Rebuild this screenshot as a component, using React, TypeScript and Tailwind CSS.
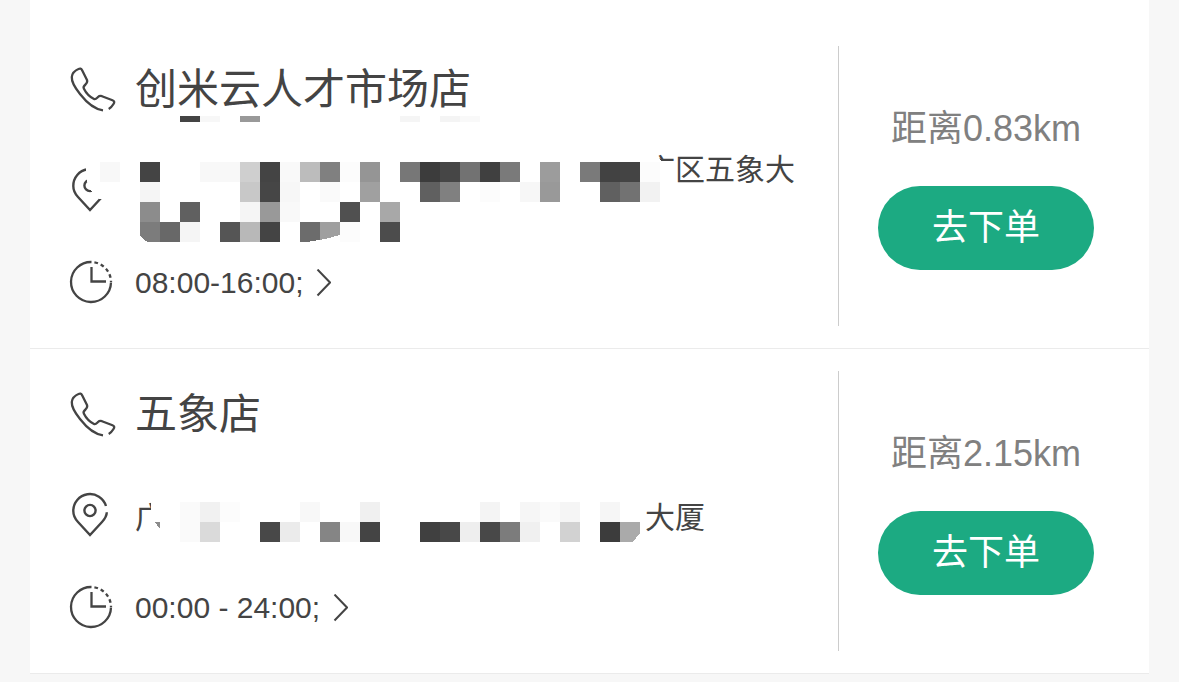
import React from 'react'

type Cell = [number, string]

interface MosaicRow {
  y: number
  h: number
  cells: Cell[]
}

interface Store {
  id: number
  name: string
  addressStart: string
  addressEnd: string
  gapClass: string
  secondLine: boolean
  hours: string
  distance: string
  // white areas that hide part of the text and icon
  masks: string[]
  rows: MosaicRow[]
  // corners cut off from the mosaic
  cuts: string[]
  chip?: string
}

const CELL = 20

const stores: Store[] = [
  {
    id: 1,
    name: '创米云人才市场店',
    addressStart: '',
    addressEnd: '庆区五象大',
    gapClass: 'w-[510px]',
    secondLine: true,
    hours: '08:00-16:00;',
    distance: '0.83km',
    masks: [
      '16,116 17,134 19,142 23,147 30,153 50,153 50,116',
      '573,100 588,100 588,112 592,115 598,116 606,116 606,145 573,145',
    ],
    rows: [
      { y: 70, h: 6, cells: [[110, '#444444'], [130, '#f7f7f7'], [170, '#999999'], [330, '#f5f5f5'], [370, '#f4f4f4'], [390, '#f9f9f9']] },
      {
        y: 116,
        h: CELL,
        cells: [
          [30, '#f8f8f8'], [70, '#444444'], [130, '#f8f8f8'], [150, '#f8f8f8'], [170, '#cfcfcf'], [190, '#444444'],
          [210, '#f9f9f9'], [230, '#bcbcbc'], [250, '#808080'], [270, '#fcfcfc'], [290, '#959595'], [330, '#777777'],
          [350, '#3c3c3c'], [370, '#464646'], [390, '#727272'], [410, '#404040'], [430, '#7a7a7a'], [470, '#9c9c9c'],
          [510, '#7a7a7a'], [530, '#424242'], [550, '#444444'], [570, '#fcfcfc'],
        ],
      },
      {
        y: 136,
        h: CELL,
        cells: [
          [70, '#f5f5f5'], [170, '#c8c8c8'], [190, '#464646'], [210, '#f7f7f7'], [250, '#fafafa'], [290, '#a0a0a0'],
          [350, '#606060'], [370, '#808080'], [410, '#fcfcfc'], [450, '#f7f7f7'], [470, '#999999'], [530, '#606060'],
          [550, '#727272'], [570, '#f2f2f2'],
        ],
      },
      {
        y: 156,
        h: CELL,
        cells: [
          [70, '#8c8c8c'], [110, '#606060'], [170, '#f5f5f5'], [190, '#999999'], [210, '#f9f9f9'], [270, '#505050'],
          [310, '#a8a8a8'],
        ],
      },
      {
        y: 176,
        h: CELL,
        cells: [
          [70, '#7c7c7c'], [90, '#686868'], [110, '#f5f5f5'], [150, '#555555'], [170, '#b8b8b8'], [190, '#444444'],
          [230, '#6c6c6c'], [250, '#9f9f9f'], [270, '#fcfcfc'], [310, '#4c4c4c'],
        ],
      },
    ],
    cuts: ['70,189 73,193 78,196 70,196', '237,196 255,193 270,189 270,196'],
  },
  {
    id: 2,
    name: '五象店',
    addressStart: '广',
    addressEnd: '大厦',
    gapClass: 'w-[480px]',
    secondLine: false,
    hours: '00:00 - 24:00;',
    distance: '2.15km',
    masks: ['81,125 102,125 102,168 81,168'],
    rows: [
      {
        y: 131,
        h: CELL,
        cells: [
          [110, '#fafafa'], [130, '#f1f1f1'], [150, '#fcfcfc'], [230, '#f8f8f8'], [290, '#f0f0f0'], [410, '#f4f4f4'],
          [450, '#f6f6f6'], [470, '#fafafa'], [490, '#f5f5f5'], [530, '#f6f6f6'],
        ],
      },
      {
        y: 151,
        h: CELL,
        cells: [
          [110, '#fafafa'], [130, '#dadada'], [190, '#484848'], [210, '#ebebeb'], [250, '#858585'], [270, '#f8f8f8'],
          [290, '#444444'], [350, '#404040'], [370, '#484848'], [390, '#eeeeee'], [410, '#484848'], [430, '#7c7c7c'],
          [450, '#f0f0f0'], [490, '#d2d2d2'], [530, '#3c3c3c'], [550, '#aaaaaa'],
        ],
      },
    ],
    cuts: ['570,162 570,171 563,171'],
    chip: '85,151 90,151 90,158',
  },
]

function PhoneIcon() {
  return (
    <svg viewBox="0 0 44 44" className="size-11 overflow-visible" fill="none" stroke="currentColor" strokeWidth="2.3" strokeLinejoin="round" aria-hidden="true">
      <path d="M33 42.3C25 41.3 17 35 10 26C4 18.5 1.5 13 1.8 9C2.2 5 5 2.5 8.5 1C10 .3 11.3 .5 12 2L17 12C17.8 14 17 15 15.5 16.5C13.5 18.2 13 19 13.8 20.5C16 25 20 29 24 31C25.5 31.8 26.5 30.5 28 29C29 28 30.5 27.7 32 28.2L42.5 32.2C44.5 33 44.7 34.5 43.5 36C42 38.5 40.5 40 38.7 41" />
    </svg>
  )
}

function PinIcon() {
  return (
    <svg viewBox="0 0 44 44" className="size-11 shrink-0 mb-1.5 overflow-visible" fill="none" stroke="currentColor" strokeWidth="2.4" aria-hidden="true">
      <path d="M36 13A16.7 16.7 0 0 0 3.3 18C3.3 22.5 5 25.8 8 29L20 42L32 29C35 25.8 36.7 23 36.8 19.3" />
      <circle cx="20" cy="17.5" r="5.6" />
    </svg>
  )
}

function ClockIcon() {
  return (
    <svg viewBox="0 0 44 44" className="size-11 shrink-0 overflow-visible" fill="none" stroke="currentColor" strokeWidth="2.3" aria-hidden="true">
      <path d="M41 21.5A20 20 0 1 1 21.5 1" />
      <path d="M21.5 1A20 20 0 0 1 41 21" strokeDasharray="3.6 3" strokeDashoffset="3.6" />
      <path d="M21.5 6V20.5H36" />
    </svg>
  )
}

function ArrowIcon() {
  return (
    <svg viewBox="0 0 16 28" className="w-4 h-7" fill="none" stroke="currentColor" strokeWidth="2" aria-hidden="true">
      <path d="M2.5 0.5L15 13.5L2.5 26.5" />
    </svg>
  )
}

function Mosaic({ store }: { store: Store }) {
  return (
    <svg className="absolute left-10 top-0 w-full h-full overflow-visible pointer-events-none" shapeRendering="crispEdges" aria-hidden="true">
      {store.masks.map((points) => (
        <polygon key={points} points={points} fill="#fff" />
      ))}
      {store.rows.map((row) =>
        row.cells.map(([x, color]) => (
          <rect key={`${x}-${row.y}`} x={x} y={row.y} width={CELL} height={row.h} fill={color} />
        ))
      )}
      {store.cuts.map((points) => (
        <polygon key={points} points={points} fill="#fff" />
      ))}
      {store.chip && <polygon points={store.chip} fill="#8c8c8c" />}
    </svg>
  )
}

function StoreItem({ store }: { store: Store }) {
  return (
    <li className="flex py-[22px] border-b border-[#ebebeb]">
      <div className="relative flex-1 min-w-0 pl-10 pt-3.5 pb-5">
        <div className="flex items-center gap-[21px]">
          <button type="button" aria-label="拨打电话" className="shrink-0">
            <PhoneIcon />
          </button>
          <h2 className="text-[42px] leading-[60px] whitespace-nowrap">{store.name}</h2>
        </div>
        <div className="flex items-center gap-[21px] mt-[27px] min-h-[92px]">
          <PinIcon />
          <div className="text-[30px] leading-[46px] whitespace-nowrap">
            <p className="flex">
              {store.addressStart && <span>{store.addressStart}</span>}
              <span className={store.gapClass} />
              <span>{store.addressEnd}</span>
            </p>
            {store.secondLine && <p className="h-[46px]" />}
          </div>
        </div>
        <div className="flex items-center gap-[21px] mt-[21px]">
          <ClockIcon />
          <button type="button" className="flex items-center gap-3 text-[30px] leading-[46px] whitespace-nowrap">
            {store.hours}
            <ArrowIcon />
          </button>
        </div>
        <Mosaic store={store} />
      </div>
      <div className="flex flex-col items-center justify-center gap-[30px] w-[311px] shrink-0 pr-4 border-l border-[#cccccc]">
        <p className="text-4xl leading-[54px] text-[#808080]">距离{store.distance}</p>
        <button type="button" className="w-[216px] h-[84px] rounded-full bg-[#1caa82] text-4xl text-white">
          去下单
        </button>
      </div>
    </li>
  )
}

function App() {
  return (
    <main className="min-h-screen bg-[#f7f7f7] px-[30px] text-[#444444] font-['Liberation_Sans','Noto_Sans_CJK_SC',sans-serif]">
      <ul className="bg-white pt-6">
        {stores.map((store) => (
          <StoreItem key={store.id} store={store} />
        ))}
      </ul>
    </main>
  )
}

export default App
